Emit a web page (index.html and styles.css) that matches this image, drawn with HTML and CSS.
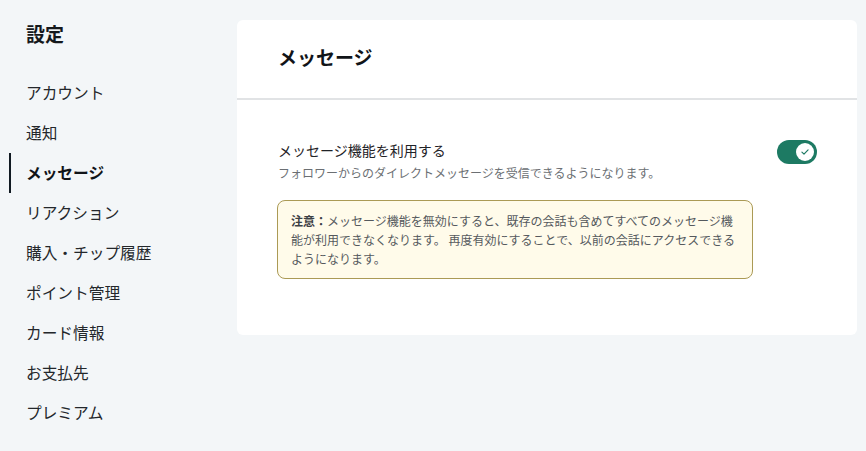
FILE: index.html
```html
<!DOCTYPE html>
<html lang="ja">
<head>
<meta charset="utf-8">
<title>設定 - メッセージ</title>
<link rel="stylesheet" href="styles.css">
</head>
<body>
<div class="layout">
  <aside class="sidebar">
    <h1 class="sidebar-title">設定</h1>
    <nav class="nav">
      <a class="nav-item" href="#">アカウント</a>
      <a class="nav-item" href="#">通知</a>
      <a class="nav-item is-active" href="#">メッセージ</a>
      <a class="nav-item" href="#">リアクション</a>
      <a class="nav-item" href="#">購入・チップ履歴</a>
      <a class="nav-item" href="#">ポイント管理</a>
      <a class="nav-item" href="#">カード情報</a>
      <a class="nav-item" href="#">お支払先</a>
      <a class="nav-item" href="#">プレミアム</a>
    </nav>
  </aside>

  <main class="card">
    <header class="card-header">
      <h2 class="card-title">メッセージ</h2>
    </header>
    <section class="card-body">
      <div class="setting-row">
        <div class="setting-text">
          <div class="setting-label">メッセージ機能を利用する</div>
          <p class="setting-desc">フォロワーからのダイレクトメッセージを受信できるようになります。</p>
        </div>
        <button class="toggle is-on" type="button" aria-pressed="true" aria-label="メッセージ機能を利用する">
          <span class="toggle-knob">
            <svg viewBox="0 0 12 12" width="10" height="10" aria-hidden="true">
              <path d="M2.3 6.2 L4.8 8.6 L9.7 3.4" fill="none" stroke="#1d7a63" stroke-width="1.4" stroke-linecap="round" stroke-linejoin="round"/>
            </svg>
          </span>
        </button>
      </div>
      <div class="notice">
        <strong class="notice-head">注意：</strong>メッセージ機能を無効にすると、既存の会話も含めてすべてのメッセージ機能が利用できなくなります。 再度有効にすることで、以前の会話にアクセスできるようになります。
      </div>
    </section>
  </main>
</div>
</body>
</html>
```

FILE: styles.css
```css
* {
  box-sizing: border-box;
}

html, body {
  margin: 0;
  padding: 0;
}

body {
  background: #f3f6f8;
  color: #1c1f23;
  font-family: "Noto Sans CJK JP", "Noto Sans", sans-serif;
  width: 866px;
  height: 451px;
  overflow: hidden;
}

.layout {
  display: flex;
  align-items: flex-start;
}

/* ---- sidebar ---- */
.sidebar {
  width: 237px;
  flex: none;
  padding: 18px 0 0 9px;
}

.sidebar-title {
  margin: 0 0 23px 17px;
  font-size: 19px;
  line-height: 32px;
  font-weight: 700;
  color: #15181c;
}

.nav {
  display: flex;
  flex-direction: column;
}

.nav-item {
  display: block;
  height: 40px;
  line-height: 40px;
  padding-left: 15px;
  border-left: 2px solid transparent;
  font-size: 15.7px;
  color: #23272b;
  text-decoration: none;
  white-space: nowrap;
}

.nav-item.is-active {
  border-left-color: #111a22;
  font-weight: 700;
  color: #111418;
}

/* ---- content card ---- */
.card {
  margin-top: 20px;
  width: 620px;
  height: 315px;
  background: #ffffff;
  border-radius: 6px;
}

.card-header {
  display: flex;
  align-items: center;
  padding: 0 41px 4px;
  border-bottom: 2px solid #e1e3e5;
  box-sizing: content-box;
  height: 74px;
}

.card-title {
  margin: 0;
  font-size: 19px;
  font-weight: 700;
  color: #111418;
  line-height: 28px;
}

.card-body {
  padding: 40px 40px 0 41px;
}

.setting-row {
  display: flex;
  justify-content: space-between;
  align-items: flex-start;
}

.setting-label {
  font-size: 14px;
  line-height: 20px;
  color: #1f2327;
}

.setting-desc {
  margin: 4px 0 0;
  font-size: 12px;
  line-height: 18px;
  color: #6b6f73;
}

.toggle {
  width: 40px;
  height: 24px;
  padding: 3px;
  border: 0;
  border-radius: 12px;
  background: #1d7a63;
  display: flex;
  justify-content: flex-end;
  align-items: center;
  cursor: pointer;
}

.toggle-knob {
  width: 18px;
  height: 18px;
  border-radius: 50%;
  background: #ffffff;
  display: flex;
  align-items: center;
  justify-content: center;
}

.notice {
  margin: 18px 0 0 -1px;
  width: 476px;
  padding: 10px 13px;
  background: #fffbea;
  border: 1px solid #ab9a55;
  border-radius: 8px;
  font-size: 12px;
  line-height: 19px;
  color: #55595d;
}

.notice-head {
  font-weight: 700;
  color: #3d4145;
}
```
